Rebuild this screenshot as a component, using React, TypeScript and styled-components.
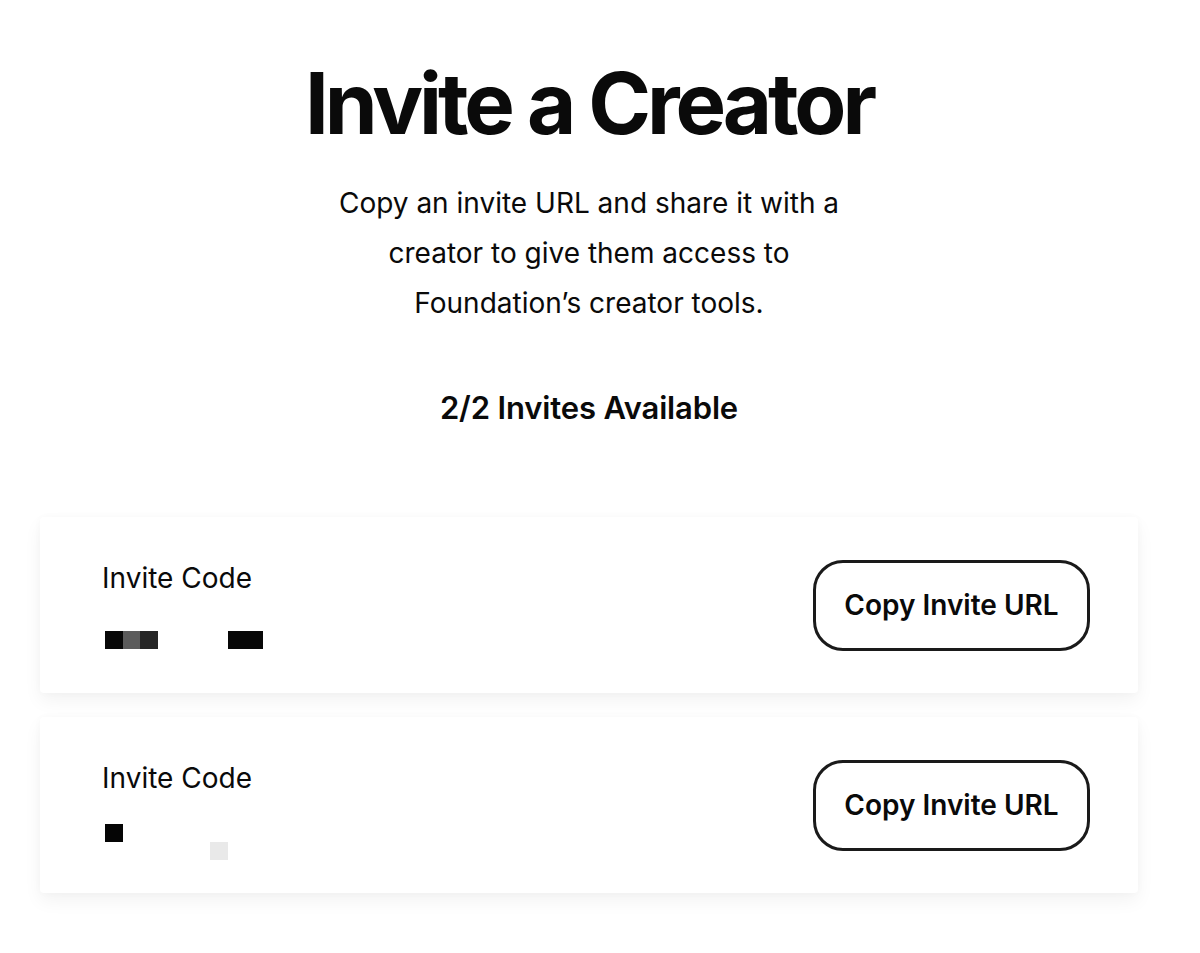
import React from "react"
import styled, { createGlobalStyle } from "styled-components"

const GlobalStyle = createGlobalStyle`
  html, body {
    margin: 0;
    padding: 0;
    background: #ffffff;
  }
  body {
    font-family: Inter, "Noto Sans", sans-serif;
    color: #0a0a0a;
  }
`

const Page = styled.div`
  width: 1200px;
  min-height: 953px;
  box-sizing: border-box;
  padding: 56px 62px 0 40px;
  display: flex;
  flex-direction: column;
`

const Header = styled.header`
  display: flex;
  flex-direction: column;
  align-items: center;
`

const Title = styled.h1`
  margin: 0;
  font-size: 85px;
  line-height: 96px;
  font-weight: 700;
  letter-spacing: -0.048em;
`

const Lead = styled.p`
  margin: 26px 0 0;
  width: 540px;
  text-align: center;
  font-size: 28px;
  line-height: 50px;
  font-weight: 400;
`

const Count = styled.h2`
  margin: 60px 0 0;
  font-size: 31px;
  line-height: 40px;
  font-weight: 600;
  letter-spacing: -0.005em;
`

const List = styled.div`
  margin-top: 89px;
  display: flex;
  flex-direction: column;
  gap: 24px;
`

const Card = styled.div`
  display: flex;
  align-items: center;
  justify-content: space-between;
  height: 176px;
  box-sizing: border-box;
  padding: 0 48px 0 62px;
  background: #ffffff;
  border-radius: 4px;
  box-shadow: 0 8px 18px rgba(0, 0, 0, 0.05), 0 0 8px rgba(0, 0, 0, 0.025);
`

const Info = styled.div`
  align-self: flex-start;
  display: flex;
  flex-direction: column;
  padding-top: 44px;
`

const Label = styled.span`
  font-size: 28px;
  line-height: 34px;
  font-weight: 400;
`

const CodeLine = styled.div<{ $top: number }>`
  display: flex;
  align-items: flex-start;
  margin-top: ${p => p.$top}px;
  padding-left: 3px;
`

const Pixel = styled.span<{ $w: number; $h?: number; $color: string; $left?: number; $down?: number }>`
  display: block;
  width: ${p => p.$w}px;
  height: ${p => p.$h ?? 18}px;
  background: ${p => p.$color};
  margin-left: ${p => p.$left ?? 0}px;
  margin-top: ${p => p.$down ?? 0}px;
`

const CopyButton = styled.button`
  width: 277px;
  height: 91px;
  box-sizing: border-box;
  border: 3px solid #1a1a1a;
  border-radius: 30px;
  background: #ffffff;
  font-family: Inter, "Noto Sans", sans-serif;
  font-size: 28px;
  font-weight: 600;
  color: #0a0a0a;
  cursor: pointer;
`

export default function App() {
  return (
    <>
      <GlobalStyle />
      <Page>
        <Header>
          <Title>Invite a Creator</Title>
          <Lead>
            Copy an invite URL and share it with a creator to give them access
            to Foundation’s creator tools.
          </Lead>
          <Count>2/2 Invites Available</Count>
        </Header>
        <List>
          <Card>
            <Info>
              <Label>Invite Code</Label>
              <CodeLine $top={36}>
                <Pixel $w={18} $color="#080808" />
                <Pixel $w={17} $color="#5b5b5b" />
                <Pixel $w={18} $color="#262626" />
                <Pixel $w={35} $color="#070707" $left={70} />
              </CodeLine>
            </Info>
            <CopyButton>Copy Invite URL</CopyButton>
          </Card>
          <Card>
            <Info>
              <Label>Invite Code</Label>
              <CodeLine $top={29}>
                <Pixel $w={18} $color="#050505" />
                <Pixel $w={18} $color="#e9e9e9" $left={87} $down={18} />
              </CodeLine>
            </Info>
            <CopyButton>Copy Invite URL</CopyButton>
          </Card>
        </List>
      </Page>
    </>
  )
}
